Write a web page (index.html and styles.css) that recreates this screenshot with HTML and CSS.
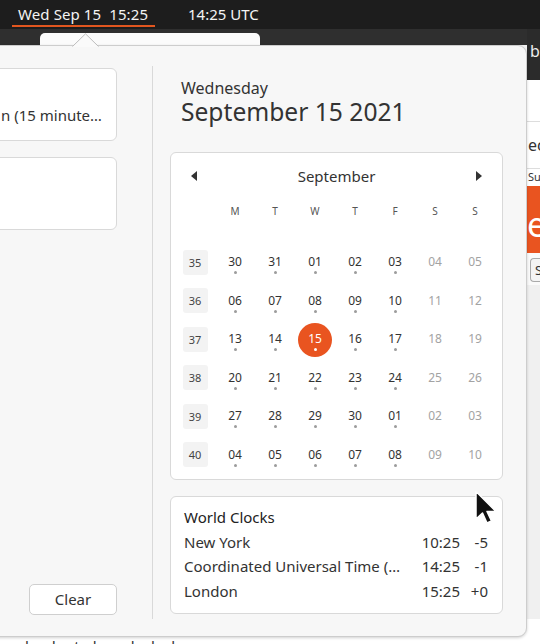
FILE: index.html
```html
<!DOCTYPE html>
<html>
<head>
<meta charset="utf-8">
<title>Calendar</title>
<link rel="stylesheet" href="styles.css">
</head>
<body>
<header class="topbar">
  <div class="clock">Wed Sep 15  15:25</div>
  <div class="utc">14:25 UTC</div>
</header>
<main class="desk">
  <div class="band"></div>
  <div class="tab"></div>
  <div class="bgwin">
    <div class="bw-head">b</div>
    <div class="bw-white">
      <div class="bw-row bw-ec">ec</div>
      <div class="bw-row bw-su">Su</div>
    </div>
    <div class="bw-orange">e</div>
    <div class="bw-btnrow"><span class="bw-btn">S</span></div>
  </div>
  <div class="hint">e calendar to launch clocks.</div>

  <section class="popup">
    <svg class="pointer" width="27" height="14" viewBox="0 0 27 14">
      <path d="M0 14 L13.5 0.8 L27 14 Z" fill="#fafafa"/>
      <path d="M0.5 13.5 L13.5 0.8 L26.5 13.5" fill="none" stroke="#bdbdbd" stroke-width="1"/>
    </svg>
    <div class="left">
      <div class="card notif"><span class="notif-text">n (15 minute…</span></div>
      <div class="card notif"></div>
      <button class="clear">Clear</button>
    </div>
    <div class="sep"></div>
    <div class="right">
      <div class="dayname">Wednesday</div>
      <div class="date">September 15 2021</div>

      <div class="card cal">
        <div class="cal-head">
          <svg class="arrow" width="6" height="10" viewBox="0 0 6 10"><path d="M6 0 L6 10 L0 5 Z" fill="#333"/></svg>
          <span class="month">September</span>
          <svg class="arrow" width="6" height="10" viewBox="0 0 6 10"><path d="M0 0 L0 10 L6 5 Z" fill="#333"/></svg>
        </div>
        <div class="cal-days">
          <span></span><span>M</span><span>T</span><span>W</span><span>T</span><span>F</span><span>S</span><span>S</span>
        </div>
        <div class="cal-weeks">
          <div class="wkc"><span class="wk">35</span></div>
          <div class="dc"><span class="d"><span class="n">30</span><i></i></span></div>
          <div class="dc"><span class="d"><span class="n">31</span><i></i></span></div>
          <div class="dc"><span class="d"><span class="n">01</span><i></i></span></div>
          <div class="dc"><span class="d"><span class="n">02</span><i></i></span></div>
          <div class="dc"><span class="d"><span class="n">03</span><i></i></span></div>
          <div class="dc"><span class="d we"><span class="n">04</span></span></div>
          <div class="dc"><span class="d we"><span class="n">05</span></span></div>

          <div class="wkc"><span class="wk">36</span></div>
          <div class="dc"><span class="d"><span class="n">06</span><i></i></span></div>
          <div class="dc"><span class="d"><span class="n">07</span><i></i></span></div>
          <div class="dc"><span class="d"><span class="n">08</span><i></i></span></div>
          <div class="dc"><span class="d"><span class="n">09</span><i></i></span></div>
          <div class="dc"><span class="d"><span class="n">10</span><i></i></span></div>
          <div class="dc"><span class="d we"><span class="n">11</span></span></div>
          <div class="dc"><span class="d we"><span class="n">12</span></span></div>

          <div class="wkc"><span class="wk">37</span></div>
          <div class="dc"><span class="d"><span class="n">13</span><i></i></span></div>
          <div class="dc"><span class="d"><span class="n">14</span><i></i></span></div>
          <div class="dc"><span class="d sel"><span class="n">15</span><i></i></span></div>
          <div class="dc"><span class="d"><span class="n">16</span><i></i></span></div>
          <div class="dc"><span class="d"><span class="n">17</span><i></i></span></div>
          <div class="dc"><span class="d we"><span class="n">18</span></span></div>
          <div class="dc"><span class="d we"><span class="n">19</span></span></div>

          <div class="wkc"><span class="wk">38</span></div>
          <div class="dc"><span class="d"><span class="n">20</span><i></i></span></div>
          <div class="dc"><span class="d"><span class="n">21</span><i></i></span></div>
          <div class="dc"><span class="d"><span class="n">22</span><i></i></span></div>
          <div class="dc"><span class="d"><span class="n">23</span><i></i></span></div>
          <div class="dc"><span class="d"><span class="n">24</span><i></i></span></div>
          <div class="dc"><span class="d we"><span class="n">25</span></span></div>
          <div class="dc"><span class="d we"><span class="n">26</span></span></div>

          <div class="wkc"><span class="wk">39</span></div>
          <div class="dc"><span class="d"><span class="n">27</span><i></i></span></div>
          <div class="dc"><span class="d"><span class="n">28</span><i></i></span></div>
          <div class="dc"><span class="d"><span class="n">29</span><i></i></span></div>
          <div class="dc"><span class="d"><span class="n">30</span><i></i></span></div>
          <div class="dc"><span class="d"><span class="n">01</span><i></i></span></div>
          <div class="dc"><span class="d we"><span class="n">02</span></span></div>
          <div class="dc"><span class="d we"><span class="n">03</span></span></div>

          <div class="wkc"><span class="wk">40</span></div>
          <div class="dc"><span class="d"><span class="n">04</span><i></i></span></div>
          <div class="dc"><span class="d"><span class="n">05</span><i></i></span></div>
          <div class="dc"><span class="d"><span class="n">06</span><i></i></span></div>
          <div class="dc"><span class="d"><span class="n">07</span><i></i></span></div>
          <div class="dc"><span class="d"><span class="n">08</span><i></i></span></div>
          <div class="dc"><span class="d we"><span class="n">09</span></span></div>
          <div class="dc"><span class="d we"><span class="n">10</span></span></div>
        </div>
      </div>

      <div class="card clocks">
        <div class="clk-title">World Clocks</div>
        <div class="clk"><span class="city">New York</span><span class="time">10:25</span><span class="off">-5</span></div>
        <div class="clk"><span class="city">Coordinated Universal Time (…</span><span class="time">14:25</span><span class="off">-1</span></div>
        <div class="clk"><span class="city">London</span><span class="time">15:25</span><span class="off">+0</span></div>
      </div>
    </div>
  </section>

  <svg class="cursor" width="26" height="38" viewBox="0 0 26 38">
    <path d="M2 1.5 L2 29 L8.5 23 L13 33 L17.5 31 L13 21.5 L22 21.5 Z" fill="#111" stroke="#fff" stroke-width="1.5" stroke-linejoin="round"/>
  </svg>
</main>
</body>
</html>
```

FILE: styles.css
```css
* { box-sizing: border-box; margin: 0; padding: 0; }
html, body { width: 540px; height: 644px; overflow: hidden; }
body {
  font-family: "Noto Sans", "Open Sans", "DejaVu Sans", sans-serif;
  color: #333;
  background: #f2f2f2;
}

/* top bar */
.topbar {
  height: 29px;
  background: #1d1d1d;
  color: #f4f4f4;
  display: flex;
  font-size: 15px;
}
.clock {
  margin-left: 12px;
  width: 143px;
  height: 27px;
  padding-left: 6px;
  line-height: 28px;
  white-space: pre;
  letter-spacing: 0.1px;
  border-bottom: 2px solid #e2561f;
}
.utc { margin-left: 33px; line-height: 28px; }

/* desktop */
.desk { position: relative; height: 615px; background: #f2f2f2; }
.band { position: absolute; left: 0; top: 0; width: 540px; height: 16px; background: #2f2f2f; }
.tab {
  position: absolute; left: 40px; top: 4px; width: 220px; height: 20px;
  background: #fbfbfb; border-radius: 5px 5px 0 0;
}

.bgwin {
  position: absolute; left: 527px; top: 0; width: 20px; height: 615px;
  background: #f0f0f0; display: flex; flex-direction: column; overflow: hidden;
}
.bw-head {
  height: 51px; background: #2b2b2b; color: #eee; font-size: 16px;
  line-height: 44px; padding-left: 3px;
}
.bw-white { height: 106px; background: #fff; padding-top: 41px; }
.bw-row { border-top: 1px solid #ddd; padding-left: 1px; }
.bw-ec { font-size: 16px; line-height: 46px; height: 47px; }
.bw-su { font-size: 11px; line-height: 16px; }
.bw-orange {
  height: 67px; background: #e95420; color: #fff; font-size: 34px;
  line-height: 76px; padding-left: 0;
}
.bw-btnrow { padding: 5px 0 0 3px; background: #fafafa; height: 32px; }
.bw-btn {
  display: block; height: 24px; border: 1px solid #aaa; border-right: 0;
  border-radius: 4px 0 0 4px; font-size: 13px; line-height: 22px; padding-left: 4px; background: #f4f4f4;
}

.hint {
  position: absolute; left: 0; top: 590px; width: 540px; height: 40px;
  background: #fff; padding-top: 17px; font-size: 15px; line-height: 20px;
  text-indent: -3px; color: #333;
}

/* popup */
.popup {
  position: absolute; left: -20px; top: 16px; width: 547px; height: 592px;
  background: #f7f7f7; border: 1px solid #cdcdcd; border-radius: 0 9px 9px 0;
  box-shadow: 0 1px 3px rgba(0,0,0,0.18);
  display: flex; z-index: 2;
}
.pointer { position: absolute; left: 91px; top: -13px; }

.left {
  width: 171px; padding: 22px 35px 21px 9px;
  display: flex; flex-direction: column; gap: 16px;
}
.card { background: #fff; border: 1px solid #d9d9d9; border-radius: 6px; }
.notif { height: 73px; padding-top: 36px; font-size: 15px; line-height: 20px; }
.notif-text { display: block; padding-left: 10px; white-space: nowrap; }
.clear {
  margin-top: auto; align-self: flex-end; width: 88px; height: 31px;
  background: #fff; border: 1px solid #cfcfcf; border-radius: 5px;
  font-family: inherit; font-size: 15px; color: #333; padding-bottom: 1px;
}
.sep { width: 1px; background: #d9d9d9; margin: 20px 0 17px; }

.right { flex: 1; padding: 33px 23px 0 17px; display: flex; flex-direction: column; }
.dayname { font-size: 16px; line-height: 18px; color: #333; padding-left: 11px; }
.date { font-size: 24.6px; line-height: 30px; color: #333; padding-left: 11px; }

.cal { margin-top: 25px; height: 328px; padding: 0 7px 0 4px; }
.cal-head {
  height: 49px; display: flex; align-items: center; justify-content: space-between;
  padding: 0 13px 3px 16px;
}
.month { font-size: 15px; color: #333; }
.cal-days {
  display: grid; grid-template-columns: repeat(8, 40px); height: 18px;
  margin-bottom: 24px; font-size: 10px; line-height: 18px; color: #555; text-align: center;
}
.cal-weeks { display: grid; grid-template-columns: repeat(8, 40px); grid-auto-rows: 38.5px; }
.wkc, .dc { display: flex; align-items: center; justify-content: center; }
.wk {
  width: 25px; height: 25px; margin-top: -2px; background: #f3f3f3; border-radius: 3px;
  font-size: 11px; line-height: 25px; text-align: center; color: #444;
}
.d {
  width: 34px; height: 34px; border-radius: 50%;
  display: flex; flex-direction: column; align-items: center; padding-top: 9px;
  color: #333;
}
.d .n { font-size: 12px; line-height: 14px; }
.d i { display: block; width: 3px; height: 3px; border-radius: 50%; background: #9c9c9c; margin-top: 2px; }
.d.we { color: #a3a3a3; }
.d.sel { background: #e95420; color: #fff; }
.d.sel i { background: #fff; }

.clocks { margin-top: 16px; height: 118px; padding: 8px 14px 10px 13px; font-size: 15px; line-height: 24.5px; }
.clk-title { color: #222; }
.clk { display: flex; color: #333; }
.city { flex: 1; white-space: nowrap; overflow: hidden; }
.time { width: 45px; text-align: right; }
.off { width: 28px; text-align: right; }

.cursor { position: absolute; left: 474px; top: 461px; z-index: 5; }
```
